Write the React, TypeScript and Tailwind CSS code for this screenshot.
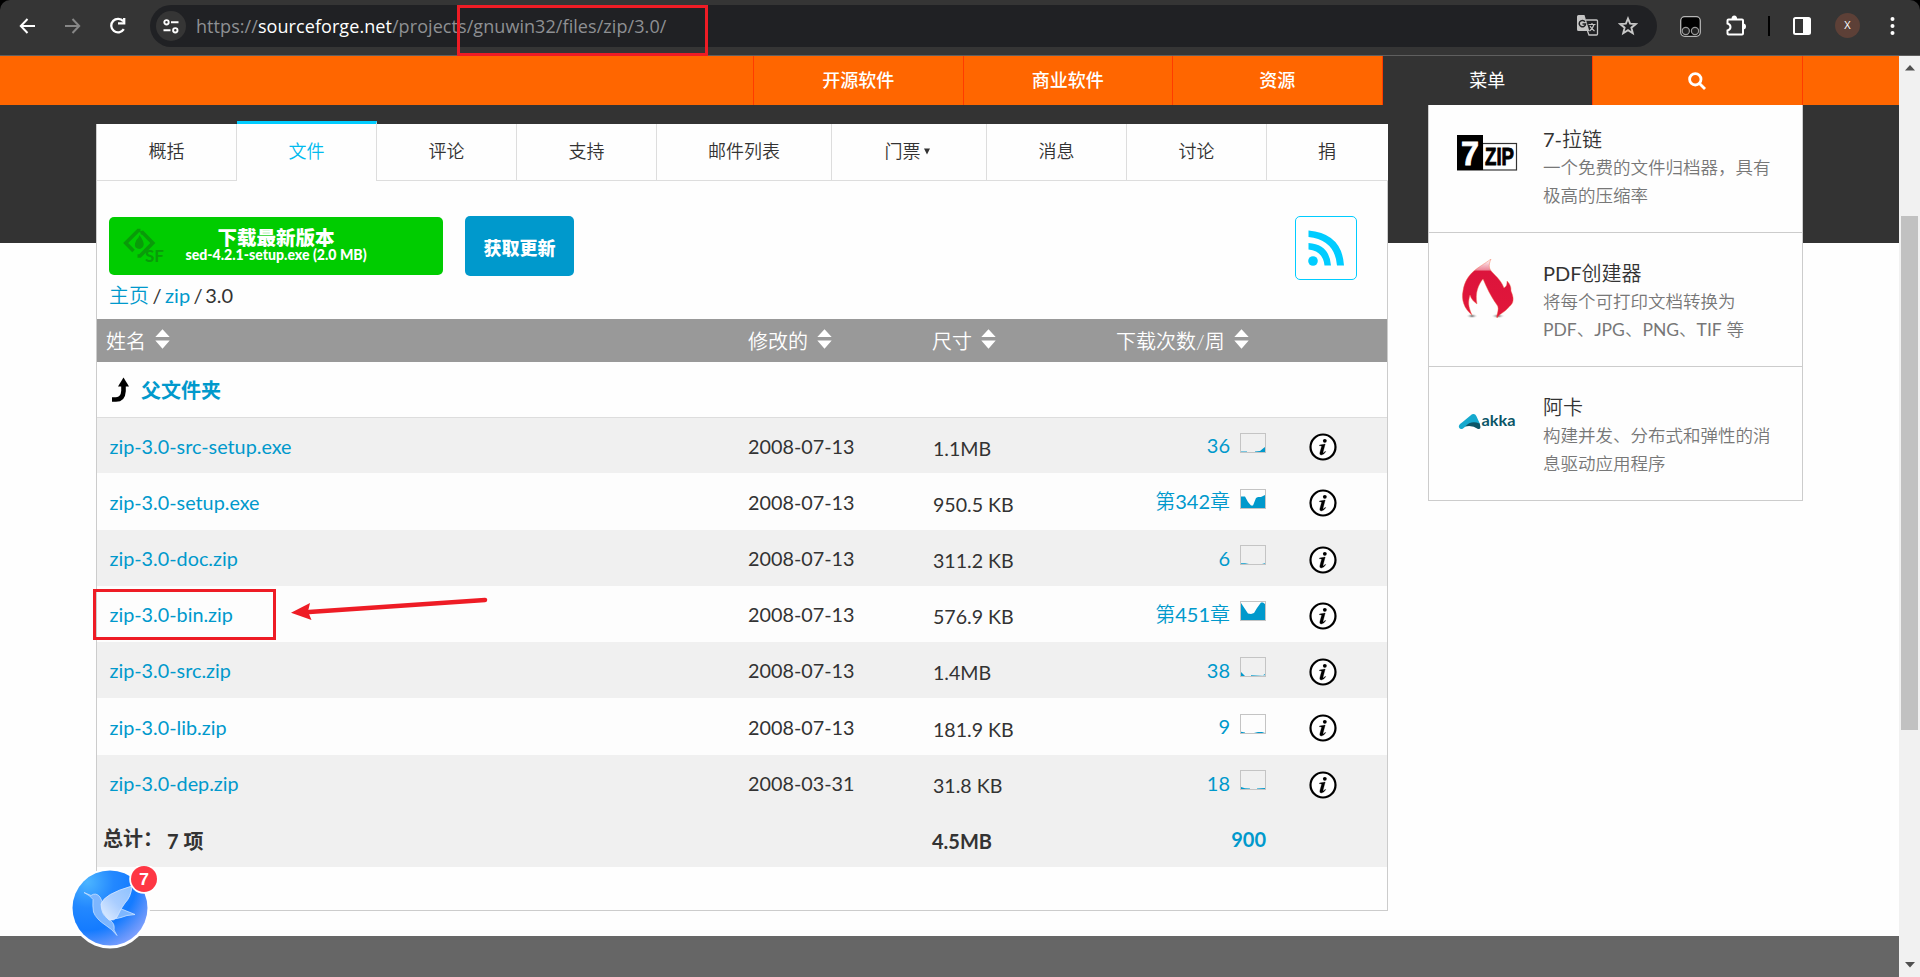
import React from 'react';

const NAV = ['开源软件', '商业软件', '资源'];

const TABS = [
  { label: '概括', width: 'w-[140px]' },
  { label: '文件', width: 'w-[140px]', active: true },
  { label: '评论', width: 'w-[140px]' },
  { label: '支持', width: 'w-[140px]' },
  { label: '邮件列表', width: 'w-[175px]' },
  { label: '门票', width: 'w-[155px]', caret: true },
  { label: '消息', width: 'w-[140px]' },
  { label: '讨论', width: 'w-[140px]' },
  { label: '捐', width: 'w-[121px]' },
];

const FILES = [
  { name: 'zip-3.0-src-setup.exe', date: '2008-07-13', size: '1.1MB', count: '36', chart: 'M1 18.6H7V19H1zM15 18.6L20 18L23 15.5L25 14V19H15z', row: 'h-[55px] bg-[#f0f0f0]' },
  { name: 'zip-3.0-setup.exe', date: '2008-07-13', size: '950.5 KB', count: '第342章', chart: 'M1 7.5H5L8 13L11 16.5H13L16 9L18 8H21L25 6V19H1z', row: 'h-[57px] bg-[#fdfdfd]' },
  { name: 'zip-3.0-doc.zip', date: '2008-07-13', size: '311.2 KB', count: '6', chart: 'M1 18.3H5L9 19H1zM22 19L25 18.3V19z', row: 'h-[56px] bg-[#f0f0f0]' },
  { name: 'zip-3.0-bin.zip', date: '2008-07-13', size: '576.9 KB', count: '第451章', chart: 'M1 2L5 8L8 12.5L11 13L14 12L17 7L21 1.5H23L25 3V19H1z', row: 'h-[56px] bg-[#fdfdfd]' },
  { name: 'zip-3.0-src.zip', date: '2008-07-13', size: '1.4MB', count: '38', chart: 'M1 15L5 19H1zM11 18.2H25V17L23 18.2L11 18.2V19H25z', row: 'h-[56px] bg-[#f0f0f0]' },
  { name: 'zip-3.0-lib.zip', date: '2008-07-13', size: '181.9 KB', count: '9', chart: 'M1 17.8L5 18.4V19H1zM14 19L18 18H22L25 19z', row: 'h-[57px] bg-[#fdfdfd]' },
  { name: 'zip-3.0-dep.zip', date: '2008-03-31', size: '31.8 KB', count: '18', chart: 'M1 17L5 18.2L10 18.4V19H1zM17 18.4L25 18V19H17z', row: 'h-[56px] bg-[#f0f0f0]' },
];

// Latin runs keep the regular weight while Chinese glyphs use the lighter inherited one.
function Mixed({ text }: { text: string }) {
  return (
    <>
      {text.split(/([A-Za-z0-9-]+)/).filter(Boolean).map((part, i) => (
        <span key={i} className={/^[A-Za-z0-9-]/.test(part) ? 'font-normal' : ''}>{part}</span>
      ))}
    </>
  );
}

function TranslateIcon() {
  return (
    <svg width="22" height="22" viewBox="0 0 22 22" className="shrink-0">
      <path d="M9 5H19.5A1 1 0 0 1 20.500 6V19A1 1 0 0 1 19.500 20H12L10.500 16" fill="none" stroke="#c4c4c4" strokeWidth="1.300" />
      <path d="M1.500 0H7.500L12.300 16H1.500A1.500 1.500 0 0 1 0 14.500V1.500A1.500 1.500 0 0 1 1.500 0z" fill="#c4c4c4" />
      <path d="M8 6.700A3.200 3.200 0 1 0 8.600 9H5.500" fill="none" stroke="#202124" strokeWidth="1.500" />
      <path d="M11.500 9.500H18.500M15 8V9.500M17 9.500Q16 13.500 12.500 16M13 11Q14.500 14 17.500 16" fill="none" stroke="#c4c4c4" strokeWidth="1.200" />
    </svg>
  );
}

function BrowserBar() {
  return (
    <div className="h-14 bg-black">
      <div className="flex h-14 items-start rounded-t-[10px] border-b border-[#5f5f5f] bg-[#353535]">
        <svg width="17" height="18" viewBox="0 0 17 18" className="ml-[19px] mt-[17px] shrink-0" fill="none" stroke="#fff" strokeWidth="2">
          <path d="M16 9H2.500M8.500 2L1.800 9L8.500 16" />
        </svg>
        <svg width="17" height="18" viewBox="0 0 17 18" className="ml-7 mt-[17px] shrink-0" fill="none" stroke="#878787" strokeWidth="2">
          <path d="M1 9H14.500M8.500 2L15.200 9L8.500 16" />
        </svg>
        <svg width="18" height="18" viewBox="0 0 18 18" className="ml-7 mt-[17px] shrink-0" fill="none" stroke="#fff" strokeWidth="2.300">
          <path d="M14.300 4.300A6.800 6.800 0 1 0 14.800 12.200M15.200 1V6.300H9" />
        </svg>
        <div className="ml-[23px] mt-[5px] flex h-[42px] w-[1507px] items-center rounded-full bg-[#202124]">
          <div className="ml-[6px] flex h-[30px] w-[30px] items-center justify-center rounded-full bg-[#353535]">
            <svg width="16" height="15" viewBox="0 0 16 15" fill="none" stroke="#fff" strokeWidth="1.900">
              <circle cx="3.500" cy="3.300" r="2.200" />
              <circle cx="12.300" cy="11.300" r="2.200" />
              <path d="M8 3.300H15.500M0.500 11.300H7.500" />
            </svg>
          </div>
          <div className="ml-[10px] whitespace-nowrap font-['Open_Sans',sans-serif] text-[18px] tracking-[0.070px] text-[#8e9093]">
            https://<span className="text-white">sourceforge.net</span>/projects/gnuwin32/files/zip/3.0/
          </div>
          <div className="flex-1" />
          <TranslateIcon />
          <svg width="20" height="20" viewBox="0 0 20 20" className="ml-[19px] mr-[19px] shrink-0" fill="none" stroke="#c7c7c7" strokeWidth="1.900" strokeLinejoin="miter">
            <path d="M10 2.500L12.100 7.700L17.700 8.100L13.400 11.700L14.800 17.200L10 14.200L5.200 17.200L6.600 11.700L2.300 8.100L7.900 7.700Z" />
          </svg>
        </div>
        <svg width="21" height="21" viewBox="0 0 21 21" className="ml-[23px] mt-4 shrink-0">
          <rect x="0.700" y="0.700" width="19.600" height="19.600" rx="4" fill="#000" stroke="#b5b5b5" strokeWidth="1.300" />
          <circle cx="5.800" cy="15" r="3.600" fill="#222" stroke="#999" strokeWidth="1.200" />
          <circle cx="15" cy="15" r="3.600" fill="#222" stroke="#999" strokeWidth="1.200" />
        </svg>
        <svg width="22" height="22" viewBox="0 0 22 22" className="ml-[24px] mt-[15px] shrink-0">
          <path d="M3.500 4.500H17A1 1 0 0 1 18 5.500V18.500A1 1 0 0 1 17 19.500H3.500A1 1 0 0 1 2.500 18.500V15.500Q5.500 14.500 5.500 12T2.500 8.500V5.500A1 1 0 0 1 3.500 4.500z" fill="none" stroke="#fff" strokeWidth="2" />
          <path d="M6.500 4A2.800 3.500 0 0 1 12.100 4zM18 8.500A3 3 0 0 1 18 14.500z" fill="#fff" />
        </svg>
        <div className="ml-[21px] mt-4 h-5 w-[2px] bg-black" />
        <svg width="18" height="18" viewBox="0 0 18 18" className="ml-[23px] mt-[17px] shrink-0">
          <rect x="1" y="1" width="16" height="16" rx="1.500" fill="none" stroke="#fff" strokeWidth="2" />
          <rect x="10" y="1" width="7" height="16" fill="#fff" />
        </svg>
        <div className="ml-6 mt-[13px] flex h-[25px] w-[25px] items-center justify-center rounded-full bg-[#5d4037] font-['Open_Sans',sans-serif] text-[11px] text-white">X</div>
        <svg width="5" height="20" viewBox="0 0 5 20" className="ml-[30px] mt-4 shrink-0" fill="#fff">
          <circle cx="2.500" cy="3" r="2" />
          <circle cx="2.500" cy="10" r="2" />
          <circle cx="2.500" cy="17" r="2" />
        </svg>
      </div>
    </div>
  );
}

function SiteNav() {
  return (
    <nav className="flex h-[49px] bg-[#ff6600] pl-[753px] text-[18px] font-medium text-white">
      {NAV.map((item) => (
        <div key={item} className="flex w-[209.5px] items-center justify-center border-l border-[#ff3b00] pb-[1px]">{item}</div>
      ))}
      <div className="flex w-[210.5px] items-center justify-center border-l border-[#ff3b00] bg-[#333] pb-[1px] font-normal">菜单</div>
      <div className="flex w-[211px] items-center justify-center border-x border-[#ff3b00] pr-[1px]">
        <svg width="18" height="18" viewBox="0 0 18 18" fill="none" stroke="#fff" strokeWidth="2.800">
          <circle cx="7.300" cy="7.300" r="5.700" />
          <path d="M11.500 11.500L17 17" />
        </svg>
      </div>
    </nav>
  );
}

function SortIcon() {
  return (
    <svg width="15" height="20" viewBox="0 0 15 20" className="mb-1 ml-[9px] shrink-0" fill="#fff">
      <path d="M7.500 0.300L14.700 8H0.300zM7.500 19.700L14.700 11.500H0.300z" />
    </svg>
  );
}

function InfoIcon() {
  return (
    <svg width="28" height="28" viewBox="0 0 28 28" className="shrink-0">
      <circle cx="14" cy="14" r="12.500" fill="#fff" stroke="#000" strokeWidth="2.200" />
      <circle cx="15.800" cy="7.800" r="1.900" />
      <path d="M10.500 12L16.200 11L14 19.300Q13.800 20.500 15 19.600L16.200 18.300L16.700 18.700Q14.500 22 12.300 22Q10.300 22 10.900 19.600L12.600 13.300Q12.800 12.500 10.500 12.700z" stroke="#000" strokeWidth="0.300" />
    </svg>
  );
}

function FileTable() {
  return (
    <div className="text-[20px] text-[#333]">
      <div className="flex h-[43px] items-center bg-[#999] font-[350] text-white">
        <div className="flex w-[651px] items-center pl-[9px]">姓名<SortIcon /></div>
        <div className="flex w-[184px] items-center">修改的<SortIcon /></div>
        <div className="flex w-[184px] items-center">尺寸<SortIcon /></div>
        <div className="flex items-center">下载次数/周<SortIcon /></div>
      </div>
      <div className="flex h-14 items-center border-b border-[#ddd] pl-[14px] font-bold text-[#0099cc]">
        <svg width="20" height="26" viewBox="0 0 20 26" className="shrink-0">
          <path d="M1 22.500H5Q12 22.500 12.500 14V8" fill="none" stroke="#000" strokeWidth="4.600" />
          <path d="M12.500 0.500L18 9.500H7z" />
        </svg>
        <span className="ml-[10px]">父文件夹</span>
      </div>
      {FILES.map((file) => (
        <div key={file.name} className={'flex items-center ' + file.row}>
          <a className="w-[651px] pl-[12.500px] pt-[2px] text-[19.800px] text-[#0099cc]">{file.name}</a>
          <div className="w-[185px] pt-[2px] text-[19.800px]">{file.date}</div>
          <div className="w-[159px] pt-[6px] text-[19.600px]">{file.size}</div>
          <div className="flex w-[174px] items-center justify-end">
            <span className="pb-[1px] font-[350] text-[#0099cc]"><Mixed text={file.count} /></span>
            <svg width="26" height="20" viewBox="0 0 26 20" className="mb-[6px] ml-[10px] shrink-0">
              <rect x="0.500" y="0.500" width="25" height="19" fill="none" stroke="#c4c4c4" />
              <path d={file.chart} fill="#0099cc" />
            </svg>
          </div>
          <div className="ml-[43px] pt-[3px]"><InfoIcon /></div>
        </div>
      ))}
      <div className="flex h-14 items-center bg-[#f0f0f0] font-bold">
        <div className="w-[70px] pb-[2px] pl-[6px]">总计：</div>
        <div className="w-[765px] pt-[3px]">7 项</div>
        <div className="w-[160px] pt-[3px]">4.5MB</div>
        <div className="w-[174px] text-right text-[#0099cc]">900</div>
      </div>
    </div>
  );
}

function SfMark() {
  return (
    <svg width="46" height="40" viewBox="0 0 46 40" className="-mb-1 -mr-[6px] shrink-0">
      <g fill="none" stroke="#099b09" strokeWidth="3.600">
        <path d="M17.500 2.500H15.200L2.700 15L10.500 23" />
        <path d="M17.500 5L19.500 4.500L29.800 15L17 28H14.500" />
      </g>
      <path d="M16.500 7Q18.500 10 20 13Q22.300 19 17 21Q11 20.500 12 15.500Q12.500 12 15.500 9.500Q15.800 8.500 16.500 7z" fill="#099b09" />
      <text x="22" y="33.500" fontSize="17" fontWeight="700" fill="#099b09" fontFamily="Lato, sans-serif">SF</text>
    </svg>
  );
}

function Panel() {
  return (
    <section className="mt-4 flex h-[787px] w-[1292px] flex-col bg-[#fefefe]">
      <div className="flex h-[57px] border-l border-[#ccc] text-[18px] font-[350] text-[#333]">
        {TABS.map((tab, i) =>
          tab.active ? (
            <div key={tab.label} className={'-mt-[3px] flex items-center justify-center border-t-[3px] border-r border-t-[#00ccff] border-r-[#ddd] bg-[#fefefe] pb-[3px] text-[#00bbee] ' + tab.width}>{tab.label}</div>
          ) : (
            <div key={tab.label} className={'flex items-center justify-center border-b border-[#ddd] pb-[2px] ' + (i < 8 ? 'border-r ' : 'pr-[1px] ') + tab.width}>
              {tab.label}
              {tab.caret && (
                <svg width="6" height="7" viewBox="0 0 6 7" className="ml-[3px] mr-[4px]" fill="#333"><path d="M0 0.500H6L3 6.500z" /></svg>
              )}
            </div>
          ),
        )}
      </div>
      <div className="flex flex-1 flex-col border-x border-b border-[#ccc]">
        <div className="flex h-[100px] items-start pl-3 pt-[35px]">
          <div className="mt-[1px] flex h-[58px] w-[334px] items-center rounded-[5px] bg-[#00cc00] pl-[14px] text-white">
            <SfMark />
            <div className="ml-[-14px] mt-[-3px] flex-1 text-center font-black">
              <div className="text-[19.500px] leading-[21px]">下载最新版本</div>
              <div className="text-[14.100px] leading-[14px]">sed-4.2.1-setup.exe (2.0 MB)</div>
            </div>
            <div className="w-[40px]" />
          </div>
          <div className="ml-[22px] flex h-[60px] w-[109px] items-center justify-center rounded-[5px] bg-[#0099cc] pt-1 text-[18px] font-black text-white">获取更新</div>
          <div className="ml-[721px] flex h-[64px] w-[62px] items-center justify-center rounded-[5px] border border-[#00ccff]">
            <svg width="36" height="36" viewBox="0 0 36 36" fill="#00ccff">
              <circle cx="5" cy="31" r="4.800" />
              <path d="M0.500 13Q21.500 14.500 23 35.500H16.500Q15 21 0.500 19.500z" />
              <path d="M0.500 0.500Q34 3.500 36 35.500H29Q27 10 0.500 7z" />
            </svg>
          </div>
        </div>
        <div className="flex h-[38px] gap-[3.500px] pl-[12px] text-[20px] leading-[28px] font-[350] text-[#333]">
          <a className="text-[#0099cc]">主页</a><span className="font-normal">/</span><a className="font-normal text-[#0099cc]">zip</a><span className="font-normal">/</span><span className="-ml-[1px] font-normal">3.0</span>
        </div>
        <FileTable />
      </div>
    </section>
  );
}

function SevenZipLogo() {
  return (
    <svg width="60" height="36" viewBox="0 0 60 36" className="overflow-visible">
      <rect x="25.500" y="8.500" width="34" height="26.500" fill="#fff" stroke="#333" strokeWidth="1.200" />
      <rect x="0" y="0" width="26" height="36" fill="#000" />
      <text x="4" y="29.500" fontSize="34" fontWeight="900" fill="#fff" stroke="#fff" strokeWidth="0.800" fontFamily="Liberation Sans, sans-serif" textLength="18" lengthAdjust="spacingAndGlyphs">7</text>
      <text x="28" y="30" fontSize="24" fontWeight="900" fill="#000" stroke="#000" strokeWidth="0.900" fontFamily="Liberation Sans, sans-serif" textLength="29" lengthAdjust="spacingAndGlyphs">ZIP</text>
      <path d="M0 35.500H60" stroke="#888" />
    </svg>
  );
}

function FlameLogo() {
  return (
    <svg width="60" height="62" viewBox="0 0 60 62">
      <defs>
        <linearGradient id="flame" x1="0" y1="0" x2="0" y2="1">
          <stop offset="0" stopColor="#fff" />
          <stop offset="0.180" stopColor="#ee8a9b" />
          <stop offset="0.210" stopColor="#dc143c" />
          <stop offset="1" stopColor="#e2173a" />
        </linearGradient>
        <radialGradient id="ground"><stop offset="0" stopColor="#555" /><stop offset="1" stopColor="#fff" stopOpacity="0" /></radialGradient>
      </defs>
      <ellipse cx="15" cy="57" rx="6" ry="2.500" fill="url(#ground)" />
      <ellipse cx="41" cy="57" rx="7" ry="2.500" fill="url(#ground)" />
      <path d="M34 0C31 7 32 10 36 14C43 21 45 24 47 29C50 27 50 25 50 22C54 26 54 29 54 32C59 43 54 46 52 48C47 54 42 55 40 59C39 56 43 50 40 46C33 36 30 29 26 20C21 26 18 34 20 45C17 43 14 40 13 36C11 43 11 47 15 56C7 50 4 40 6 32C9 13 22 9 34 0z" fill="url(#flame)" stroke="#f26a4a" strokeWidth="0.700" strokeOpacity="0.600" />
    </svg>
  );
}

function AkkaLogo() {
  return (
    <svg width="60" height="20" viewBox="0 0 60 20">
      <path d="M2 15.500Q1 13 5 10.500L15 2.300Q18 1 19.300 4L23 12Q23.500 15 20 13Q14 8.500 6 16.500Q3.500 18 2 15.500z" fill="#15a9ce" />
      <path d="M8 14.500Q14 8 22.500 11.500Q25 17.500 21 17Q15 12.500 8 14.500z" fill="#0b5567" />
      <text x="24.500" y="13.500" fontSize="15.500" fontWeight="700" fill="#0b5567" fontFamily="Lato, sans-serif" textLength="34" lengthAdjust="spacingAndGlyphs">akka</text>
    </svg>
  );
}

function SideItem({ logo, title, lines, first }: { logo: React.ReactNode; title: string; lines: string[]; first?: boolean }) {
  return (
    <div className={'flex border-b border-[#ccc] ' + (first ? 'h-[128px] pt-[20px]' : 'h-[134px] pt-[26px]')}>
      <div className="ml-[28px] flex w-[60px] justify-center">{logo}</div>
      <div className="ml-[26px] font-[350] whitespace-nowrap">
        <div className="text-[20px] leading-[28px] text-[#333]"><Mixed text={title} /></div>
        <div className="pt-[1px]">
          {lines.map((line) => (
            <div key={line} className="text-[17.500px] leading-[28px] text-[#777]"><Mixed text={line} /></div>
          ))}
        </div>
      </div>
    </div>
  );
}

function Sidebar() {
  return (
    <aside className="ml-10 w-[375px] border-x border-[#ccc] bg-[#fefefe]">
      <SideItem first logo={<div className="pt-[10px]"><SevenZipLogo /></div>} title="7-拉链" lines={['一个免费的文件归档器，具有', '极高的压缩率']} />
      <SideItem logo={<FlameLogo />} title="PDF创建器" lines={['将每个可打印文档转换为', 'PDF、JPG、PNG、TIF 等']} />
      <SideItem logo={<div className="pt-[19px]"><AkkaLogo /></div>} title="阿卡" lines={['构建并发、分布式和弹性的消', '息驱动应用程序']} />
    </aside>
  );
}

function BirdBubble() {
  return (
    <div className="absolute left-[71px] top-[866px] h-[84px] w-[88px]">
      <svg width="88" height="84" viewBox="0 0 88 84">
        <defs>
          <radialGradient id="sky" cx="0.200" cy="0.150" r="1">
            <stop offset="0" stopColor="#4cb5ff" />
            <stop offset="0.350" stopColor="#2388ff" />
            <stop offset="0.650" stopColor="#147bff" />
            <stop offset="0.850" stopColor="#5b92fb" />
            <stop offset="1" stopColor="#8aa4ff" />
          </radialGradient>
          <linearGradient id="wing" x1="0" y1="1" x2="1" y2="0">
            <stop offset="0" stopColor="#e4efff" />
            <stop offset="0.500" stopColor="#a9cdff" />
            <stop offset="1" stopColor="#8ec2ff" />
          </linearGradient>
        </defs>
        <circle cx="39" cy="42.500" r="40" fill="#fff" />
        <circle cx="39" cy="42" r="37.500" fill="url(#sky)" />
        <path d="M13 26.500L20 29.500Q25 26 29 31Q32 35 31 40Q30 48 36 52L40 55Q44 58 43 64L46 69.500Q41 63 35 59.500Q25 53 22.500 46Q21.500 40 22 33.500Q20 30 13 26.500z" fill="#7db6ff" stroke="#c5dfff" strokeWidth="0.800" />
        <path d="M40 53L48 42L64 48.500Q55 49 50 51.500Q45 53 40 53z" fill="#7db6ff" stroke="#cfe4ff" strokeWidth="0.800" />
        <path d="M61 20Q60 31 54 37Q50 42 46 51Q43 55 38 54Q30 47 30 38Q33 28 61 20z" fill="url(#wing)" stroke="#d9e9ff" strokeWidth="0.800" />
        <circle cx="73" cy="13" r="14.800" fill="#fff" />
        <circle cx="73" cy="13" r="13" fill="#fe3744" />
        <text x="68" y="18.800" fontSize="16" fontWeight="700" fill="#fff" fontFamily="Liberation Sans, sans-serif" textLength="10" lengthAdjust="spacingAndGlyphs">7</text>
      </svg>
    </div>
  );
}

export default function App() {
  return (
    <div className="relative h-[977px] w-[1920px] overflow-hidden bg-[#fefefe] font-['Lato','Noto_Sans_CJK_SC',sans-serif]">
      <BrowserBar />
      <div className="flex h-[921px]">
        <div className="w-[1899px]">
          <SiteNav />
          <main className="flex h-[831px] items-start bg-[linear-gradient(#333_138px,#fefefe_138px)] pl-24">
            <div className="pt-[3px]"><Panel /></div>
            <Sidebar />
          </main>
          <footer className="h-[41px] bg-[#666]" />
        </div>
        <div className="flex w-[21px] flex-col items-center bg-[#f1f1f1]">
          <svg width="10" height="6" viewBox="0 0 10 6" className="mt-[9px]" fill="#505050"><path d="M5 0L10 5.500H0z" /></svg>
          <div className="mt-[145px] h-[514px] w-[17px] bg-[#c1c1c1]" />
          <svg width="10" height="6" viewBox="0 0 10 6" className="mt-[232px]" fill="#505050"><path d="M5 5.500L10 0H0z" /></svg>
        </div>
      </div>
      <div className="absolute left-[457px] top-[5px] h-[51px] w-[251px] border-[3px] border-[#ee1c25]" />
      <div className="absolute left-[93px] top-[589px] h-[51px] w-[183px] border-[3px] border-[#ee1c25]" />
      <svg width="200" height="30" viewBox="0 0 200 30" className="absolute left-[290px] top-[595px]">
        <path d="M195 5L19 17" stroke="#ee1c25" strokeWidth="4.600" strokeLinecap="round" />
        <path d="M1 17.700L20 8L18 16.500L21.500 25z" fill="#ee1c25" />
      </svg>
      <BirdBubble />
    </div>
  );
}
